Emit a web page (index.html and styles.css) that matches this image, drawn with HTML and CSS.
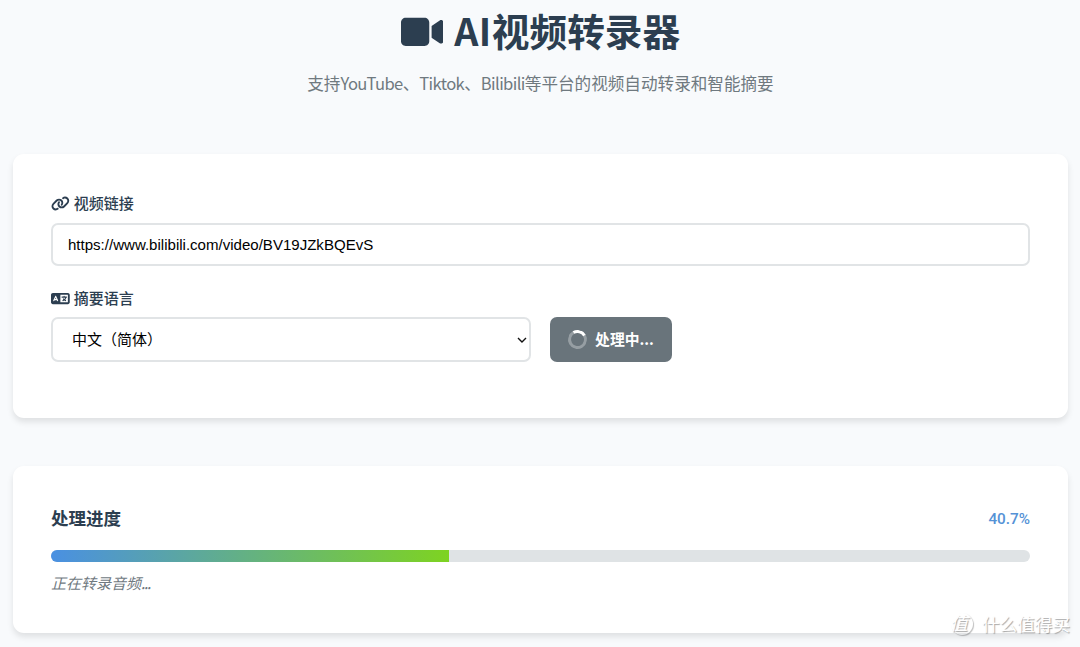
FILE: index.html
```
<!DOCTYPE html>
<html lang="zh-CN">
<head>
    <meta charset="UTF-8">
    <meta name="viewport" content="width=device-width, initial-scale=1.0">
    <title>AI视频转录器</title>
    <link rel="stylesheet" href="styles.css">
</head>
<body>
    <div class="container">
        <!-- 页头 -->
        <header class="header">
            <h1>
                <svg class="icon icon-video" viewBox="0 0 576 512"><path d="M0 128C0 92.7 28.7 64 64 64H320c35.3 0 64 28.7 64 64V384c0 35.3-28.7 64-64 64H64c-35.3 0-64-28.7-64-64V128zM559.1 99.8c10.4 5.6 16.9 16.4 16.9 28.2V384c0 11.8-6.5 22.6-16.9 28.2s-23 5-32.9-1.6l-96-64L416 337.1V320 192 174.9l14.2-9.5 96-64c9.8-6.5 22.4-7.2 32.9-1.6z"/></svg>
                <span class="title"><span class="title-en">AI</span>视频转录器</span>
            </h1>
            <p>支持<span class="en">YouTube</span>、<span class="en">Tiktok</span>、<span class="en">Bilibili</span>等平台的视频自动转录和智能摘要</p>
        </header>

        <!-- 输入表单 -->
        <form class="card form-card">
            <label class="label" for="videoUrl">
                <svg class="icon" viewBox="0 0 640 512"><path d="M579.8 267.7c56.5-56.5 56.5-148 0-204.5c-50-50-128.8-56.5-186.3-15.4l-1.6 1.1c-14.4 10.3-17.7 30.3-7.4 44.6s30.3 17.7 44.6 7.4l1.6-1.1c32.1-22.9 76-19.3 103.8 8.6c31.5 31.5 31.5 82.5 0 114L422.3 334.8c-31.5 31.5-82.5 31.5-114 0c-27.9-27.9-31.5-71.8-8.6-103.8l1.1-1.6c10.3-14.4 6.9-34.4-7.4-44.6s-34.4-6.9-44.6 7.4l-1.1 1.6C206.5 251.2 213 330 263 380c56.5 56.5 148 56.5 204.5 0L579.8 267.7zM60.2 244.3c-56.5 56.5-56.5 148 0 204.5c50 50 128.8 56.5 186.3 15.4l1.6-1.1c14.4-10.3 17.7-30.3 7.4-44.6s-30.3-17.7-44.6-7.4l-1.6 1.1c-32.1 22.9-76 19.3-103.8-8.6C74 372 74 321 105.5 289.5L217.7 177.2c31.5-31.5 82.5-31.5 114 0c27.9 27.9 31.5 71.8 8.6 103.9l-1.1 1.6c-10.3 14.4-6.9 34.4 7.4 44.6s34.4 6.9 44.6-7.4l1.1-1.6C433.5 260.8 427 182 377 132c-56.5-56.5-148-56.5-204.5 0L60.2 244.3z"/></svg>
                <span>视频链接</span>
            </label>
            <input class="input" type="text" id="videoUrl" value="https://www.bilibili.com/video/BV19JZkBQEvS">

            <label class="label" for="language">
                <svg class="icon" viewBox="0 0 640 512"><path d="M0 128C0 92.7 28.7 64 64 64H256h48 16H576c35.3 0 64 28.7 64 64V384c0 35.3-28.7 64-64 64H320 304 256 64c-35.3 0-64-28.7-64-64V128zm320 0V384H576V128H320zM178.3 175.9c-3.2-7.2-10.4-11.9-18.3-11.9s-15.1 4.7-18.3 11.9l-64 144c-4.5 10.1 .1 21.9 10.2 26.4s21.9-.1 26.4-10.2l8.9-20.1h73.6l8.9 20.1c4.5 10.1 16.3 14.7 26.4 10.2s14.7-16.3 10.2-26.4l-64-144zM160 233.2L179 276H141l19-42.8zM448 164c11 0 20 9 20 20v4h44 16c11 0 20 9 20 20s-9 20-20 20h-2l-1.6 4.5c-8.9 24.4-22.4 46.6-39.6 65.4c.9 .6 1.8 1.1 2.7 1.6l18.9 11.3c9.5 5.7 12.5 18 6.9 27.4s-18 12.5-27.4 6.9l-18.9-11.3c-4.5-2.7-8.8-5.5-13.1-8.5c-10.6 7.5-21.9 14-34 19.4l-3.6 1.6c-10.1 4.5-21.9-.1-26.4-10.2s.1-21.9 10.2-26.4l3.6-1.6c6.4-2.9 12.6-6.1 18.5-9.8l-12.2-12.2c-7.8-7.8-7.8-20.5 0-28.3s20.5-7.8 28.3 0l14.6 14.6 .5 .5c12.4-13.1 22.5-28.3 29.8-45H448 376c-11 0-20-9-20-20s9-20 20-20h52v-4c0-11 9-20 20-20z"/></svg>
                <span>摘要语言</span>
            </label>
            <div class="form-row">
                <div class="select-wrap">
                    <select class="select" id="language">
                        <option selected>中文（简体）</option>
                    </select>
                    <svg class="chevron" viewBox="0 0 10 6"><path d="M1 1l4 4 4-4"/></svg>
                </div>
                <button class="btn" type="button" disabled>
                    <span class="spinner"></span>
                    <span>处理中...</span>
                </button>
            </div>
        </form>

        <!-- 处理进度 -->
        <section class="card progress-card">
            <div class="progress-header">
                <h3>处理进度</h3>
                <span class="percent">40.7%</span>
            </div>
            <div class="progress-bar">
                <div class="progress-fill" style="width: 40.7%"></div>
            </div>
            <p class="progress-message">正在转录音频<span class="dots">...</span></p>
        </section>
    </div>

    <!-- 水印 -->
    <div class="watermark">
        <span class="watermark-logo">值</span>
        <span>什么值得买</span>
    </div>
</body>
</html>
```
FILE: styles.css
```
* {
    margin: 0;
    padding: 0;
    box-sizing: border-box;
}

body {
    font-family: "Noto Sans CJK SC", sans-serif;
    background: #f8fafc;
    color: #2c3e50;
    height: 647px;
    position: relative;
    overflow: hidden;
}

.container {
    padding: 0 12px 0 13px;
}

.icon {
    height: 1em;
    fill: currentColor;
}

/* 页头 */
.header {
    height: 154px;
    text-align: center;
}

.header h1 {
    display: flex;
    justify-content: center;
    align-items: center;
    gap: 11px;
    height: 64px;
    font-size: 37.7px;
    font-weight: 700;
}

.title {
    height: 64px;
    line-height: 59px;
}

.title-en {
    letter-spacing: 0.5px;
}

.header p {
    margin-top: 6px;
    font-size: 16.6px;
    line-height: 26px;
    color: #6f797f;
}

.en {
    letter-spacing: -0.6px;
}

/* 卡片 */
.card {
    background: #fff;
    border-radius: 11px;
    box-shadow: 0 4px 6px rgba(0, 0, 0, 0.1);
    padding: 38px;
}

.form-card {
    height: 264px;
    padding-top: 37px;
    margin-bottom: 48px;
}

.label {
    display: flex;
    align-items: center;
    gap: 4px;
    height: 23px;
    margin-bottom: 8px;
    font-size: 15px;
    font-weight: 500;
}

.label .icon {
    margin-top: 1px;
}

.input,
.select {
    display: block;
    width: 100%;
    border: 2px solid #e1e4e6;
    border-radius: 7px;
    background: #fff;
    color: #000;
    font-size: 15px;
}

.input {
    height: 43px;
    padding: 0 15px;
    margin: 9px 0 20px;
    font-family: "Liberation Sans", sans-serif;
    font-size: 15.05px;
}

.form-row {
    display: flex;
    gap: 19px;
}

.select-wrap {
    position: relative;
    width: 480px;
}

.select {
    height: 45px;
    padding: 0 19px 3px;
    font-family: "Noto Sans CJK SC", sans-serif;
    appearance: none;
}

.chevron {
    position: absolute;
    right: 4px;
    top: 20px;
    width: 10px;
    height: 6px;
    fill: none;
    stroke: #111;
    stroke-width: 1.4;
}

.btn {
    display: flex;
    justify-content: center;
    align-items: center;
    gap: 8px;
    width: 122px;
    height: 45px;
    padding-bottom: 3px;
    border: none;
    border-radius: 7px;
    background: #69747b;
    color: #fff;
    font-family: inherit;
    font-size: 14.8px;
    font-weight: 700;
}

.spinner {
    width: 19px;
    height: 19px;
    margin-top: 3px;
    border: 3px solid rgba(255, 255, 255, 0.3);
    border-top-color: #fff;
    border-radius: 50%;
    transform: rotate(15deg);
}

/* 进度 */
.progress-card {
    height: 167px;
    padding-top: 37px;
}

.progress-header {
    display: flex;
    justify-content: space-between;
    align-items: center;
    height: 28px;
    margin-bottom: 19px;
}

.progress-header h3 {
    font-size: 17.5px;
    font-weight: 700;
}

.percent {
    padding-top: 3px;
    color: #5592d6;
    font-family: Roboto, sans-serif;
    font-size: 15.3px;
    font-weight: 500;
}

.progress-bar {
    height: 12px;
    border-radius: 6px;
    background: #dfe3e5;
    overflow: hidden;
}

.progress-fill {
    height: 100%;
    background: linear-gradient(90deg, #4a90e2, #7ed321);
}

.progress-message {
    margin-top: 9px;
    font-size: 15px;
    line-height: 23px;
    font-style: italic;
    color: #6f797f;
}

.dots {
    letter-spacing: -1.2px;
}

/* 水印 */
.watermark {
    position: absolute;
    right: 10px;
    bottom: 10px;
    display: flex;
    align-items: center;
    gap: 9px;
    color: #fff;
    font-size: 17.6px;
    line-height: 26px;
    text-shadow: 1px 1px 1px rgba(0, 0, 0, 0.35);
}

.watermark-logo {
    width: 22px;
    height: 22px;
    border-radius: 50%;
    box-shadow: 1px 1px 1px rgba(0, 0, 0, 0.25);
    line-height: 20px;
    text-indent: -1px;
    font-style: italic;
}
```
